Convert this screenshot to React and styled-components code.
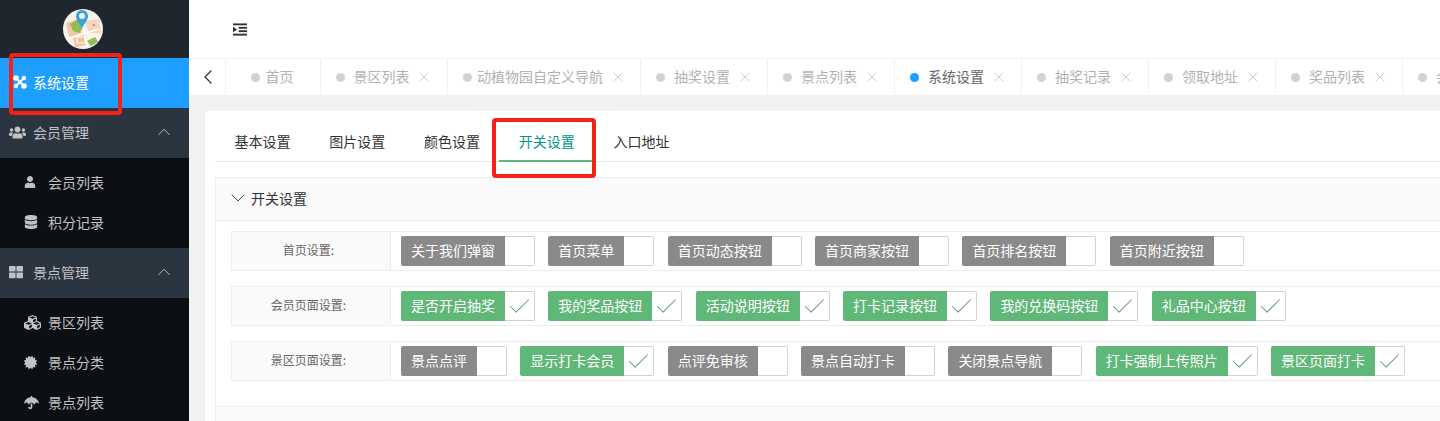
import styled, { createGlobalStyle } from 'styled-components'
import { FaUsers, FaUser, FaDatabase, FaThLarge, FaCubes, FaCertificate, FaUmbrella } from 'react-icons/fa'
import { X, Check, ChevronUp, ChevronDown, ChevronLeft } from 'lucide-react'

const GlobalStyle = createGlobalStyle`
	html, body {
		margin: 0;
		padding: 0;
		height: 421px;
		overflow: hidden;
		background: #f2f2f2;
	}
	body, button {
		font-family: "Noto Sans CJK SC", "Liberation Sans", sans-serif;
		font-size: 14px;
	}
`

const topTabs = [
	{ name: '首页', home: true },
	{ name: '景区列表' },
	{ name: '动植物园自定义导航', long: true },
	{ name: '抽奖设置' },
	{ name: '景点列表' },
	{ name: '系统设置', active: true },
	{ name: '抽奖记录' },
	{ name: '领取地址' },
	{ name: '奖品列表' },
	{ name: '会员等级' },
]

const formTabs = ['基本设置', '图片设置', '颜色设置', '开关设置', '入口地址']

const rows = [
	{
		label: '首页设置:',
		items: [
			{ name: '关于我们弹窗' },
			{ name: '首页菜单' },
			{ name: '首页动态按钮' },
			{ name: '首页商家按钮' },
			{ name: '首页排名按钮' },
			{ name: '首页附近按钮' },
		],
	},
	{
		label: '会员页面设置:',
		items: [
			{ name: '是否开启抽奖', on: true },
			{ name: '我的奖品按钮', on: true },
			{ name: '活动说明按钮', on: true },
			{ name: '打卡记录按钮', on: true },
			{ name: '我的兑换码按钮', on: true },
			{ name: '礼品中心按钮', on: true },
		],
	},
	{
		label: '景区页面设置:',
		items: [
			{ name: '景点点评' },
			{ name: '显示打卡会员', on: true },
			{ name: '点评免审核' },
			{ name: '景点自动打卡' },
			{ name: '关闭景点导航' },
			{ name: '打卡强制上传照片', on: true },
			{ name: '景区页面打卡', on: true },
		],
	},
]

function Logo() {
	return (
		<LogoSvg viewBox="0 0 40 40">
			<defs>
				<clipPath id="logo-clip">
					<circle cx="20" cy="20" r="20" />
				</clipPath>
			</defs>
			<g clipPath="url(#logo-clip)">
				<rect width="40" height="40" fill="#f6f3ec" />
				<path d="M3 14 L15 10 L19 24 L6 28 Z" fill="#f3c9a5" />
				<path d="M22 12 L36 10 L38 24 L26 24 Z" fill="#f5d5bb" />
				<path d="M10 28 L22 24 L24 36 L12 38 Z" fill="#f2c39c" />
				<path d="M7 15 L16 10 L21 18 L16 24 L10 22 Z" fill="#8fbb58" />
				<path d="M24 32 L32 28 L35 33 L28 37 Z" fill="#8fbb58" />
				<path d="M14 28 h8 v6 h-8 Z" fill="none" stroke="#fff" strokeWidth="1.2" />
				<path d="M4 30 L36 20 M18 8 L24 38" stroke="#fff" strokeWidth="1.4" />
				<circle cx="31" cy="16" r="1.2" fill="#e2846a" />
			</g>
			<path d="M19 19 C16 14 13 11 13 7 A6 6 0 0 1 25 7 C25 11 22 14 19 19 Z" fill="#3fa2d6" />
			<circle cx="19" cy="7" r="3" fill="#e9f6fb" />
		</LogoSvg>
	)
}

function NodesIcon() {
	return (
		<svg width="14" height="14" viewBox="0 0 14 14" fill="#fff">
			<path d="M3 3 L11 11 M11 3 L3 11" stroke="#fff" strokeWidth="2" />
			<circle cx="3" cy="3" r="2.8" />
			<circle cx="11" cy="3" r="2.2" />
			<circle cx="3" cy="11" r="2.2" />
			<circle cx="11" cy="11" r="2.8" />
			<circle cx="7" cy="7" r="2" />
		</svg>
	)
}

function OutdentIcon() {
	return (
		<svg width="14" height="13" viewBox="0 0 15 13" fill="#333">
			<rect x="0" y="0" width="15" height="2" />
			<rect x="6" y="3.7" width="9" height="2" />
			<rect x="6" y="7.3" width="9" height="2" />
			<rect x="0" y="11" width="15" height="2" />
			<path d="M0 3.5 L4.5 6.5 L0 9.5 Z" />
		</svg>
	)
}

function Switch({ name, on }) {
	return (
		<SwitchBox>
			<SwitchLabel $on={on}>{name}</SwitchLabel>
			<SwitchMark>{on && <Check size={27} strokeWidth={0.9} color="#5f9a78" />}</SwitchMark>
		</SwitchBox>
	)
}

export default function App() {
	return (
		<>
			<GlobalStyle />
			<Page>
				<Sidebar>
					<LogoBar>
						<Logo />
					</LogoBar>
					<ActiveItem>
						<NodesIcon />
						系统设置
					</ActiveItem>
					<Group>
						<GroupIcon>
							<FaUsers size={17} />
						</GroupIcon>
						<GroupName>会员管理</GroupName>
						<GroupArrow>
							<ChevronUp size={22} strokeWidth={1} />
						</GroupArrow>
					</Group>
					<SubList>
						<SubItem>
							<SubIcon>
								<FaUser size={12} />
							</SubIcon>
							会员列表
						</SubItem>
						<SubItem>
							<SubIcon>
								<FaDatabase size={14} />
							</SubIcon>
							积分记录
						</SubItem>
					</SubList>
					<Group>
						<GroupIcon>
							<FaThLarge size={14} />
						</GroupIcon>
						<GroupName>景点管理</GroupName>
						<GroupArrow>
							<ChevronUp size={22} strokeWidth={1} />
						</GroupArrow>
					</Group>
					<SubList>
						<SubItem>
							<SubIcon>
								<FaCubes size={17} />
							</SubIcon>
							景区列表
						</SubItem>
						<SubItem>
							<SubIcon>
								<FaCertificate size={13} />
							</SubIcon>
							景点分类
						</SubItem>
						<SubItem>
							<SubIcon>
								<FaUmbrella size={15} />
							</SubIcon>
							景点列表
						</SubItem>
					</SubList>
					<RedMark $left={9} $top={53} $width={113} $height={62} />
				</Sidebar>
				<Main>
					<TopBar>
						<OutdentIcon />
					</TopBar>
					<TabStrip>
						<PrevButton>
							<ChevronLeft size={24} strokeWidth={1.3} />
						</PrevButton>
						{topTabs.map((tab) => (
							<TopTab key={tab.name} $home={tab.home}>
								<Dot $active={tab.active} />
								<TopTabName $active={tab.active} $wide={!tab.home && !tab.long}>
									{tab.name}
								</TopTabName>
								{!tab.home && (
									<CloseMark>
										<X size={16} strokeWidth={0.9} />
									</CloseMark>
								)}
							</TopTab>
						))}
					</TabStrip>
					<Content>
						<Card>
							<FormTabs>
								{formTabs.map((tab, i) => (
									<FormTab key={tab} $active={i === 3}>
										{tab}
									</FormTab>
								))}
								<RedMark $left={277} $top={7} $width={104} $height={60} />
							</FormTabs>
							<Panel>
								<PanelHead>
									<PanelArrow>
										<ChevronDown size={24} strokeWidth={0.9} />
									</PanelArrow>
									开关设置
								</PanelHead>
								<PanelBody>
									{rows.map((row) => (
										<Row key={row.label}>
											<RowLabel>{row.label}</RowLabel>
											<RowValue>
												{row.items.map((item) => (
													<Switch key={item.name} name={item.name} on={item.on} />
												))}
											</RowValue>
										</Row>
									))}
								</PanelBody>
								<NextPanelHead />
							</Panel>
						</Card>
					</Content>
				</Main>
			</Page>
		</>
	)
}

const Page = styled.div`
	display: flex;
	width: 1440px;
	height: 421px;
	overflow: hidden;
`
const Sidebar = styled.aside`
	position: relative;
	flex: 0 0 189px;
	background: #0c1015;
	color: #c2c2c2;
	overflow: hidden;
`
const LogoBar = styled.div`
	display: flex;
	align-items: center;
	height: 58px;
	padding-left: 63px;
	background: #1f262e;
`
const LogoSvg = styled.svg`
	width: 40px;
	height: 40px;
`
const ActiveItem = styled.div`
	display: flex;
	align-items: center;
	gap: 6px;
	height: 50px;
	box-sizing: border-box;
	padding: 0 0 2px 13px;
	background: #1e9fff;
	color: #fff;
`
const Group = styled.div`
	display: flex;
	align-items: center;
	height: 50px;
	box-sizing: border-box;
	padding: 0 14px 2px 9px;
	background: #2b3540;
`
const GroupIcon = styled.span`
	display: flex;
	width: 24px;
`
const GroupName = styled.span`
	flex: 1;
`
const GroupArrow = styled.span`
	display: flex;
`
const SubList = styled.div`
	padding: 5px 0;
`
const SubItem = styled.div`
	display: flex;
	align-items: center;
	height: 40px;
	box-sizing: border-box;
	padding: 0 0 2px 24px;
`
const SubIcon = styled.span`
	display: flex;
	justify-content: flex-start;
	width: 24px;
`
const RedMark = styled.div`
	position: absolute;
	left: ${({ $left }) => $left}px;
	top: ${({ $top }) => $top}px;
	width: ${({ $width }) => $width}px;
	height: ${({ $height }) => $height}px;
	box-sizing: border-box;
	border: 4px solid #f3211a;
	border-radius: 4px;
	pointer-events: none;
`
const Main = styled.main`
	flex: 1;
	min-width: 0;
	overflow: hidden;
`
const TopBar = styled.header`
	display: flex;
	align-items: center;
	height: 58px;
	padding-left: 44px;
	background: #fff;
`
const TabStrip = styled.nav`
	display: flex;
	height: 37px;
	box-sizing: border-box;
	border-top: 1px solid #f2f2f2;
	background: #fff;
	overflow: hidden;
`
const PrevButton = styled.div`
	display: flex;
	flex: 0 0 37px;
	align-items: center;
	justify-content: center;
	box-sizing: border-box;
	padding-left: 1px;
	border-right: 1px solid #f2f2f2;
	color: #333;
`
const TopTab = styled.div`
	display: flex;
	flex: none;
	align-items: center;
	box-sizing: border-box;
	padding: ${({ $home }) => ($home ? '0 26px 2px 25px' : '0 17px 2px 15px')};
	border-right: 1px solid #f2f2f2;
	color: #b2b2b2;
`
const Dot = styled.i`
	flex: none;
	width: 9px;
	height: 9px;
	margin-top: 2px;
	border-radius: 50%;
	background: ${({ $active }) => ($active ? '#1e9fff' : '#d2d2d2')};
`
const TopTabName = styled.span`
	margin-left: ${({ $wide }) => ($wide ? '9px' : '5.5px')};
	color: ${({ $active }) => ($active ? '#666' : '#b2b2b2')};
`
const CloseMark = styled.span`
	display: flex;
	justify-content: center;
	width: 11px;
	margin: 2px 0 0 9px;
	color: #aaa;
	svg {
		flex: none;
	}
`
const Content = styled.div`
	padding: 16px 0 0 16px;
`
const Card = styled.section`
	width: 1300px;
	height: 320px;
	box-sizing: border-box;
	padding: 0 10px;
	border-radius: 2px 0 0 0;
	background: #fff;
`
const FormTabs = styled.div`
	position: relative;
	display: flex;
	height: 51px;
	box-sizing: border-box;
	border-bottom: 1px solid #e6e6e6;
`
const FormTab = styled.div`
	flex: none;
	box-sizing: border-box;
	height: 51px;
	padding: 0 19.4px;
	line-height: 60px;
	color: ${({ $active }) => ($active ? '#009688' : '#333')};
	border-bottom: 2px solid ${({ $active }) => ($active ? '#5fb878' : 'transparent')};
`
const Panel = styled.div`
	margin-top: 15px;
	border: 1px solid #eee;
	border-bottom: 0;
`
const PanelHead = styled.div`
	display: flex;
	align-items: center;
	gap: 6px;
	height: 40px;
	padding: 0 0 2px 15px;
	border-bottom: 1px solid #eee;
	background: #fafafa;
	color: #333;
`
const PanelArrow = styled.span`
	display: flex;
	justify-content: center;
	width: 14px;
	svg {
		flex: none;
	}
`
const PanelBody = styled.div`
	display: flex;
	flex-direction: column;
	gap: 15px;
	padding: 10px 0 25px 15px;
`
const NextPanelHead = styled.div`
	height: 42px;
	border-top: 1px solid #eee;
	background: #fafafa;
`
const Row = styled.div`
	display: flex;
	height: 40px;
	box-sizing: border-box;
	border: 1px solid #eee;
	border-right: 0;
`
const RowLabel = styled.div`
	display: flex;
	flex: 0 0 159px;
	align-items: center;
	justify-content: center;
	box-sizing: border-box;
	padding: 0 5px 3px 0;
	border-right: 1px solid #eee;
	background: #fafafa;
	font-size: 12px;
	color: #666;
`
const RowValue = styled.div`
	display: flex;
	align-items: center;
	gap: 13.35px;
	padding-left: 10px;
`
const SwitchBox = styled.div`
	display: flex;
	height: 30px;
	box-sizing: border-box;
`
const SwitchLabel = styled.span`
	padding: 0 10px;
	line-height: 28px;
	border-radius: 2px 0 0 2px;
	background: ${({ $on }) => ($on ? '#5fb878' : '#8a8a8a')};
	color: #fff;
`
const SwitchMark = styled.span`
	display: flex;
	align-items: center;
	justify-content: center;
	width: 30px;
	box-sizing: border-box;
	border: 1px solid #d2d2d2;
	border-left: 0;
	border-radius: 0 2px 2px 0;
	background: #fff;
	svg {
		flex: none;
	}
`
